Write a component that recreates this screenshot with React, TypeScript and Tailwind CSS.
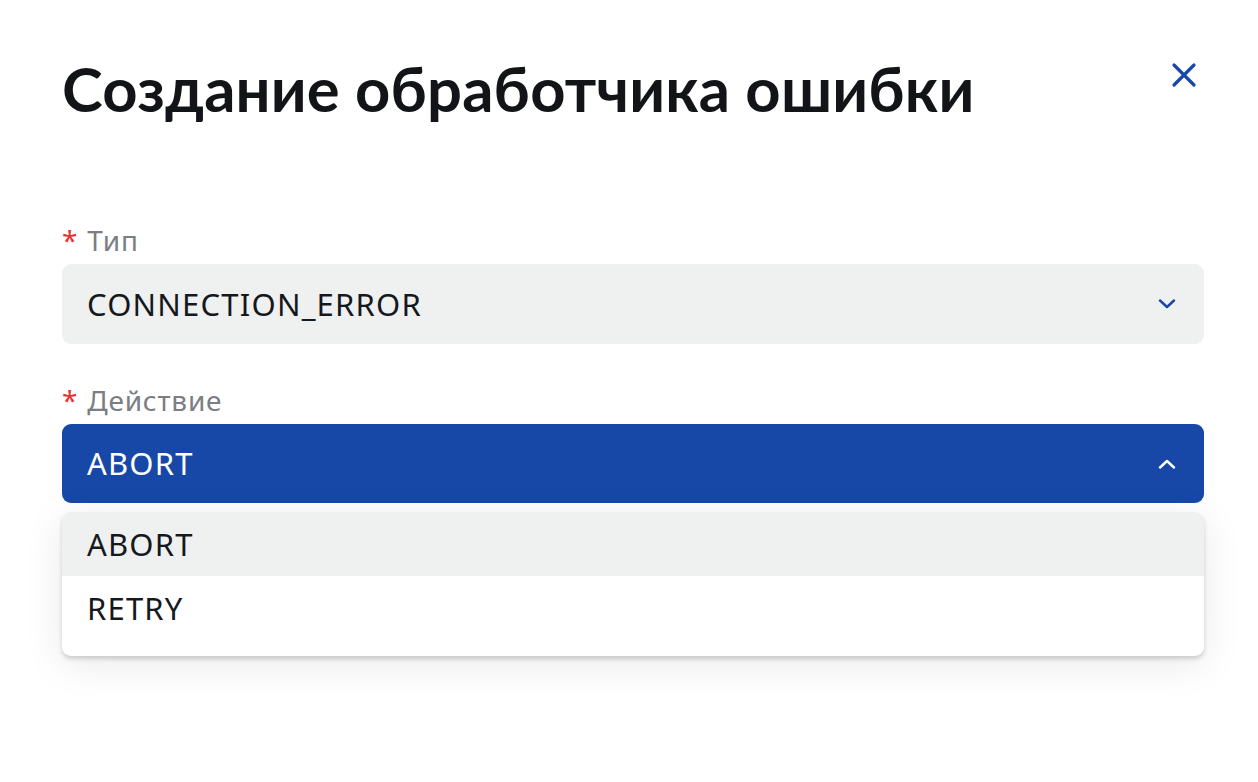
import { useState } from 'react';

const OPTIONS = ['ABORT', 'RETRY'];

function Chevron({ up, className }: { up?: boolean; className?: string }) {
  return (
    <svg width="18" height="10" viewBox="0 0 18 10" fill="none" className={className}>
      <path
        d={up ? 'M2 8.5L9 2L16 8.5' : 'M2 1.5L9 8L16 1.5'}
        stroke="currentColor"
        strokeWidth="2.4"
        strokeLinecap="round"
        strokeLinejoin="round"
      />
    </svg>
  );
}

function Label({ text }: { text: string }) {
  return (
    <div className="mb-[8px] flex items-center gap-[9px] text-[28px] leading-[32px] tracking-[0.8px] text-[#7b7e83]">
      <span className="text-[#e5322d]">*</span>
      <span>{text}</span>
    </div>
  );
}

export default function App() {
  const [value] = useState('ABORT');

  return (
    <div
      className="h-[782px] w-[1258px] bg-white pt-[52px] pr-[54px] pl-[62px]"
      style={{ fontFamily: '"Noto Sans", "Open Sans", sans-serif' }}
    >
      <header className="flex items-start justify-between">
        <h1
          className="text-[61.5px] leading-[72px] font-bold tracking-[0.2px] text-[#121417]"
          style={{ fontFamily: 'Lato, "Noto Sans", sans-serif' }}
        >
          Создание обработчика ошибки
        </h1>
        <button className="mt-[10px] mr-[7px] text-[#1748a8]" aria-label="Закрыть">
          <svg width="26" height="26" viewBox="0 0 26 26" fill="none">
            <path d="M3 3L23 23M23 3L3 23" stroke="currentColor" strokeWidth="3.2" strokeLinecap="round" />
          </svg>
        </button>
      </header>

      <div className="mt-[100px]">
        <Label text="Тип" />
        <div className="flex h-[80px] items-center justify-between rounded-[9px] bg-[#eff0f0] pr-[28px] pl-[25px]">
          <span className="text-[31px] tracking-[1.2px] text-[#15181c]">CONNECTION_ERROR</span>
          <Chevron className="text-[#1748a8]" />
        </div>
      </div>

      <div className="mt-[40px]">
        <Label text="Действие" />
        <div className="relative">
          <div className="flex h-[79px] items-center justify-between rounded-[9px] bg-[#1748a8] pr-[28px] pl-[25px]">
            <span className="text-[31px] tracking-[1.2px] text-white">{value}</span>
            <Chevron up className="text-white" />
          </div>
          <ul className="absolute top-[88px] right-0 left-0 overflow-hidden rounded-[9px] bg-white pb-[16px] shadow-[0_3px_4px_rgba(0,0,0,0.16),0_8px_40px_rgba(0,0,0,0.09)]">
            {OPTIONS.map((o) => (
              <li
                key={o}
                className={`flex h-[64px] items-center pl-[25px] text-[31px] tracking-[1.2px] text-[#15181c] ${
                  o === value ? 'bg-[#eff0f0]' : ''
                }`}
              >
                {o}
              </li>
            ))}
          </ul>
        </div>
      </div>
    </div>
  );
}
